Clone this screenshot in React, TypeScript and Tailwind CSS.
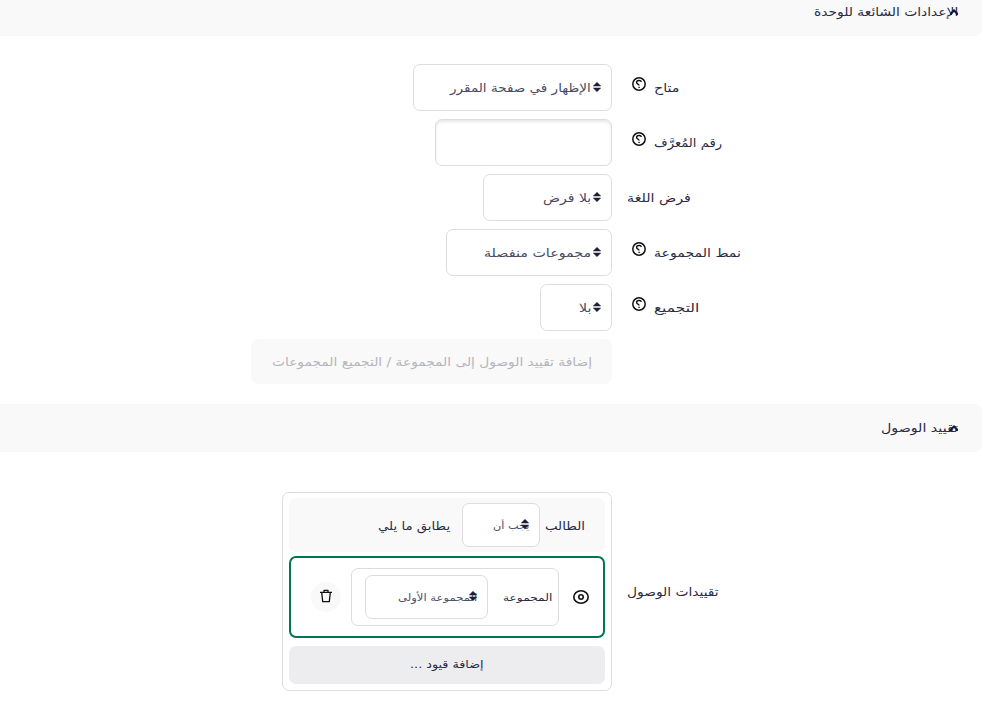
import React, { useLayoutEffect, useRef, useState } from "react";

type TextProps = { text: string; width: number; className?: string };

// Arabic label condensed or widened to a set measure.
function Fit({ text, width, className = "" }: TextProps) {
  const ref = useRef<HTMLSpanElement>(null);
  const [scale, setScale] = useState(1);
  useLayoutEffect(() => {
    if (ref.current) setScale(width / ref.current.offsetWidth);
  }, [width, text]);
  return (
    <span className={`flex h-6 shrink-0 items-center whitespace-nowrap ${className}`} style={{ width }}>
      <span ref={ref} className="inline-block shrink-0 origin-right" style={{ transform: `scaleX(${scale})` }}>
        {text}
      </span>
    </span>
  );
}

function Sort() {
  return (
    <svg className="mb-[2px] h-[10px] w-[8px] shrink-0" viewBox="0 0 8 10" fill="#1d1d35" stroke="#1d1d35" strokeWidth=".5" strokeLinejoin="round">
      <path d="M4 .3 7.7 4H.3zM4 9.7.3 6h7.4z" />
    </svg>
  );
}

function Help() {
  return (
    <svg className="mb-[7px] h-[14px] w-[14px] shrink-0" viewBox="0 0 14 14" fill="none" stroke="#111" strokeWidth="1.5">
      <circle cx="7" cy="7" r="6.2" />
      <path d="M9.4 4.9C8.9 2.9 4.6 3 4.6 5.4c0 2 2.5 1.6 2.5 3.2" strokeWidth="1.4" />
      <path d="M6.4 10.4h1.4" strokeWidth="1.3" />
    </svg>
  );
}

function Row({ label, width, help, children }: { label: string; width: number; help?: boolean; children: React.ReactNode }) {
  return (
    <div className="flex h-[47px]">
      <div className="flex w-[370px] items-center justify-end pl-[15px]">
        <Fit text={label} width={width} />
        {help && <div className="mr-2 ml-[5px] flex"><Help /></div>}
      </div>
      {children}
    </div>
  );
}

function Select({ text, width, className }: { text: string; width: number; className: string }) {
  return (
    <div className={`flex h-[47px] items-center gap-[2px] rounded-[7px] border border-[#dddde1] bg-white pr-[10px] ${className}`}>
      <Sort />
      <Fit text={text} width={width} className="text-[#4a4a60]" />
    </div>
  );
}

function Caret() {
  return (
    <svg className="absolute top-[4px] right-0 h-[7px] w-[8px]" viewBox="0 0 8 7" fill="none" stroke="#171734" strokeWidth="2">
      <path d="M1 6V4.5L4 1.5l3 3V6" />
    </svg>
  );
}

export default function App() {
  return (
    <div dir="rtl" className="h-[721px] overflow-hidden bg-white pr-3 font-['DejaVu_Sans',sans-serif] text-[12px] text-[#2b2b45]">
      <header className="flex h-9 items-start rounded-br-[7px] bg-[#f9f9f9] pr-6">
        <div className="relative">
          <Fit text="الإعدادات الشائعة للوحدة" width={144} />
          <div className="absolute top-[5px] right-0"><Caret /></div>
        </div>
      </header>

      <section className="mt-7 flex flex-col gap-2">
        <Row label="متاح" width={25} help>
          <Select text="الإظهار في صفحة المقرر" width={141} className="w-[199px]" />
        </Row>
        <Row label="رقم المُعرَّف" width={68} help>
          <div className="h-[47px] w-[177px] rounded-[7px] border border-[#dddde1] shadow-[inset_0_2px_3px_#00000018]" />
        </Row>
        <Row label="فرض اللغة" width={64}>
          <Select text="بلا فرض" width={48} className="w-[129px]" />
        </Row>
        <Row label="نمط المجموعة" width={87} help>
          <Select text="مجموعات منفصلة" width={107} className="w-[166px]" />
        </Row>
        <Row label="التجميع" width={45} help>
          <Select text="بلا" width={13} className="w-[72px]" />
        </Row>
        <div className="mr-[370px] flex h-[45px] w-[361px] items-center rounded-[7px] bg-[#f9f9f9] pr-5 text-[#b5b5bb]">
          <Fit text="إضافة تقييد الوصول إلى المجموعة / التجميع المجموعات" width={320} />
        </div>
      </section>

      <header className="mt-5 flex h-12 items-center rounded-r-[7px] bg-[#f9f9f9] pr-6">
        <div className="relative">
          <Fit text="تقييد الوصول" width={77} />
          <div className="absolute top-[5px] right-0"><Caret /></div>
        </div>
      </header>

      <section className="mt-10 flex">
        <div className="flex w-[370px] items-center justify-end pl-[15px]">
          <Fit text="تقييدات الوصول" width={92} />
        </div>
        <div className="h-[199px] w-[330px] rounded-[7px] border border-[#dddde1] p-[6px] pt-[5px]">
          <div className="flex h-[54px] items-center rounded-[7px] bg-[#f9f9f9] pr-5">
            <Fit text="الطالب" width={40} className="mt-[2px]" />
            <div className="relative mr-[5px] flex h-11 w-[78px] items-center rounded-[7px] border border-[#dddde1] bg-white pr-[10px] text-[10px] text-[#50506a]">
              <Fit text="يجب أن" width={36} />
              <div className="absolute right-[10px] flex"><Sort /></div>
            </div>
            <Fit text="يطابق ما يلي" width={72} className="mt-[2px] mr-3" />
          </div>
          <div className="mt-1 flex h-[82px] items-center rounded-[7px] border-2 border-[#007651] pr-[14px]">
            <svg className="h-[16px] w-[16px]" viewBox="0 0 16 16" fill="none" stroke="#111" strokeWidth="1.6">
              <ellipse cx="8" cy="8" rx="7.2" ry="6.3" />
              <circle cx="8" cy="8" r="2.2" />
            </svg>
            <div className="mr-[14px] flex h-[58px] w-[208px] items-center rounded-[7px] border border-[#dddde1] pr-[6px] text-[10px]">
              <Fit text="المجموعة" width={49} />
              <div className="relative mr-[15px] flex h-11 w-[123px] items-center rounded-[7px] border border-[#dddde1] pr-[10px] text-[#50506a]">
                <Fit text="المجموعة الأولى" width={79} />
                <div className="absolute right-[10px] flex"><Sort /></div>
              </div>
            </div>
            <div className="mr-[10px] flex h-[30px] w-[30px] items-center justify-center rounded-full bg-[#f9f9f9]">
              <svg className="mb-[2px] h-[14px] w-[12px]" viewBox="0 0 12 14" fill="none" stroke="#111" strokeWidth="1.3" strokeLinejoin="round">
                <path d="M0 3.4h12M4 3.2V1.4h4v1.8M1.7 3.4l1 9.2h6.6l1-9.2" />
              </svg>
            </div>
          </div>
          <div className="mt-2 flex h-[38px] items-center justify-center rounded-[7px] bg-[#ededef] text-[11px]">
            <Fit text="إضافة قيود ..." width={74} />
          </div>
        </div>
      </section>
    </div>
  );
}
